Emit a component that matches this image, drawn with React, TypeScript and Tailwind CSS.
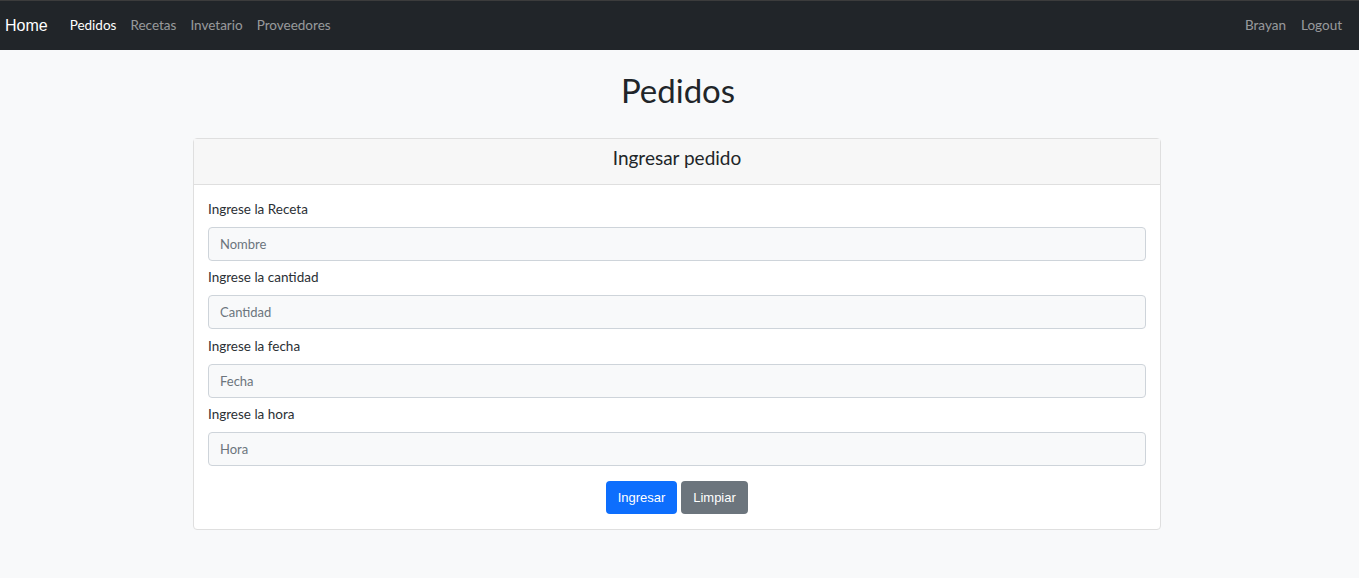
const fields = [
  { label: "Ingrese la Receta", placeholder: "Nombre" },
  { label: "Ingrese la cantidad", placeholder: "Cantidad" },
  { label: "Ingrese la fecha", placeholder: "Fecha" },
  { label: "Ingrese la hora", placeholder: "Hora" },
]

const App = () => {
  return (
    <div className="min-h-[578px] bg-[#f8f9fa] font-['Lato',sans-serif] text-[#212529]">
      <nav className="flex h-[50px] items-center justify-between border-t border-[#3c3c3c] bg-[#212529] pl-[5px] pr-[17px]">
        <div className="flex items-center">
          <a className="mr-[22px] font-['Liberation_Sans',sans-serif] text-[16px] text-white">
            Home
          </a>
          <div className="flex gap-[14px] text-[13.5px] text-[#ffffff8c]">
            <a className="text-white">Pedidos</a>
            <a>Recetas</a>
            <a>Invetario</a>
            <a>Proveedores</a>
          </div>
        </div>
        <div className="flex gap-[15px] text-[13.5px] text-[#ffffff8c]">
          <a>Brayan</a>
          <a>Logout</a>
        </div>
      </nav>

      <h1 className="mt-[21px] pr-[3px] text-center text-[33px] leading-[38px]">Pedidos</h1>

      <div className="ml-[193px] mt-[29px] w-[968px] rounded-[4px] border border-[#dfdfdf] bg-white">
        <div className="h-[46px] border-b border-[#dfdfdf] bg-[#f7f7f7] pt-[6px] text-center text-[19px] leading-[25px]">
          Ingresar pedido
        </div>
        <form className="px-[14px] pt-[16px] pb-[15px]">
          <div className="flex flex-col gap-[8.4px]">
            {fields.map((f) => (
              <div key={f.label}>
                <label className="mb-[10px] block text-[13.5px] leading-[16px] text-[#2b3035]">{f.label}</label>
                <input
                  placeholder={f.placeholder}
                  className="h-[34px] w-full rounded-[4px] border border-[#ced4da] bg-[#f8f9fa] px-[11px] text-[13px] outline-none placeholder:text-[#6c757d]"
                />
              </div>
            ))}
          </div>
          <div className="mt-[15px] flex justify-center gap-[4px] font-['Liberation_Sans',sans-serif] text-[13px]">
            <button type="button" className="h-[33px] w-[71px] rounded-[4px] bg-[#0d6efd] text-white">
              Ingresar
            </button>
            <button type="button" className="h-[33px] w-[67px] rounded-[4px] bg-[#6c757d] text-white">
              Limpiar
            </button>
          </div>
        </form>
      </div>
    </div>
  )
}

export default App
